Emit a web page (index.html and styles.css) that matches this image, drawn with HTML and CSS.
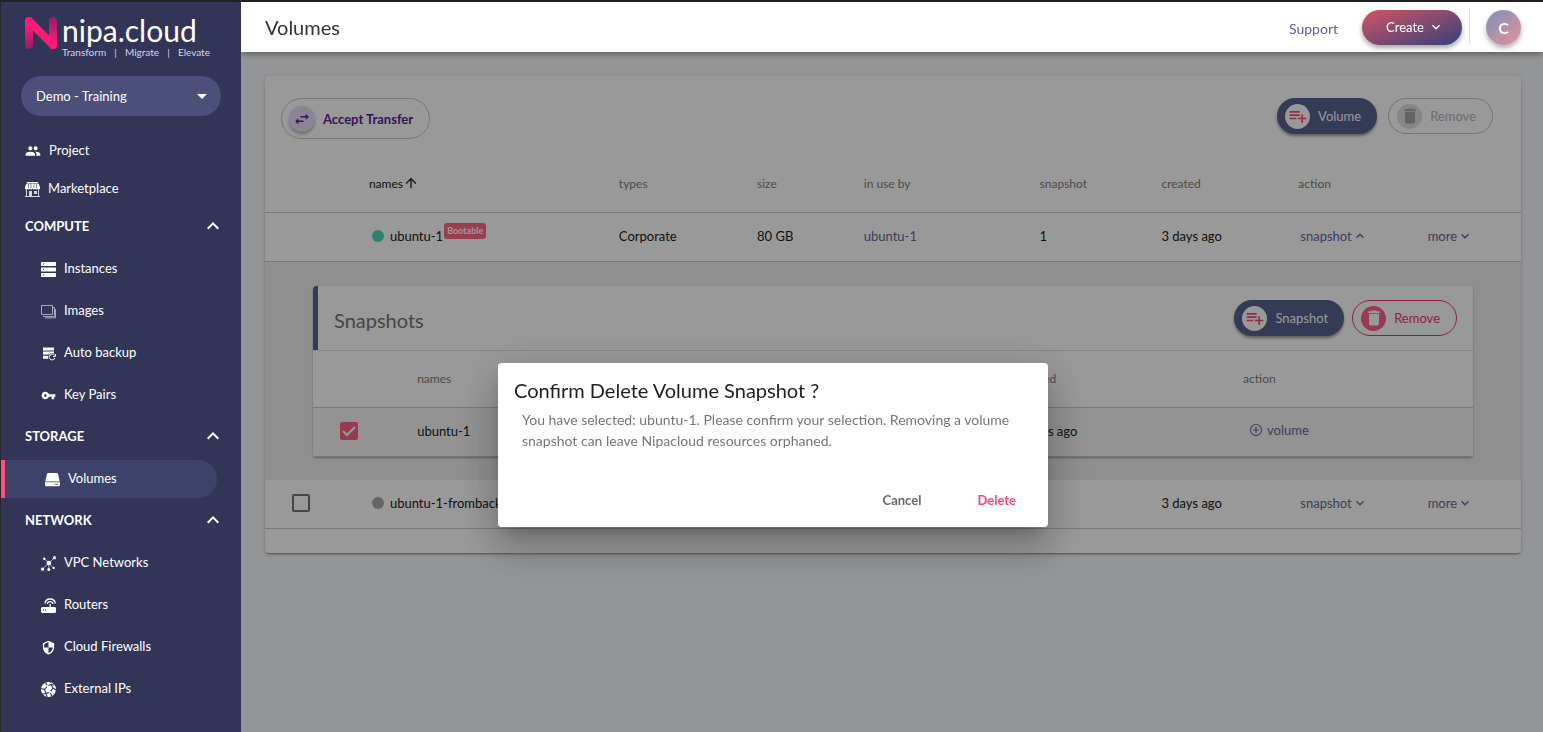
FILE: index.html
```
<!DOCTYPE html>
<html lang="en">
<head>
<meta charset="utf-8">
<title>Volumes - nipa.cloud</title>
<link rel="stylesheet" href="styles.css">
</head>
<body>
<svg class="sprite" aria-hidden="true">
  <symbol id="down" viewBox="0 0 24 24"><path d="M7.41 8.59 12 13.17l4.59-4.58L18 10l-6 6-6-6z"/></symbol>
  <symbol id="up" viewBox="0 0 24 24"><path d="M7.41 15.41 12 10.83l4.59 4.58L18 14l-6-6-6 6z"/></symbol>
  <symbol id="list-add" viewBox="0 0 24 24"><path d="M14 10H2v2h12zM14 6H2v2h12zM18 14v-4h-2v4h-4v2h4v4h2v-4h4v-2zM2 16h8v-2H2z"/></symbol>
  <symbol id="trash" viewBox="0 0 24 24"><path d="M6 19c0 1.100.9 2 2 2h8c1.100 0 2-.9 2-2V7H6zM19 4h-3.500l-1-1h-5l-1 1H5v2h14z"/></symbol>
</svg>

<div class="app">
  <aside class="sidebar">
    <div class="brand">
      <svg class="brand-mark" viewBox="0 0 32 32" aria-hidden="true">
        <defs>
          <linearGradient id="stem-left" x1="0" y1="0" x2="0" y2="1"><stop offset=".3" stop-color="#ff1a75"/><stop offset="1" stop-color="#8c1f68"/></linearGradient>
          <linearGradient id="stem-right" x1="0" y1="0" x2="0" y2="1"><stop offset="0" stop-color="#8c1f68"/><stop offset=".8" stop-color="#ff1a75"/></linearGradient>
        </defs>
        <rect x="0" y="0" width="8" height="32" rx="4" fill="url(#stem-left)"/>
        <rect x="24" y="0" width="8" height="32" rx="4" fill="url(#stem-right)"/>
        <path d="M4 4 28 28" stroke="#ff1a75" stroke-width="8" stroke-linecap="round"/>
      </svg>
      <div class="brand-text">
        <span class="brand-name">nipa.cloud</span>
        <span class="brand-tag"><span>Transform</span><span>|</span><span>Migrate</span><span>|</span><span>Elevate</span></span>
      </div>
    </div>

    <button class="project-picker" type="button">
      <span>Demo - Training</span>
      <svg class="icon-24" viewBox="0 0 24 24" aria-hidden="true"><path d="m7 10 5 5 5-5z"/></svg>
    </button>

    <nav class="nav">
      <a class="nav-top" href="#"><svg class="icon-16" viewBox="0 0 24 24" aria-hidden="true"><path d="M16 11c1.660 0 3-1.340 3-3s-1.340-3-3-3-3 1.340-3 3 1.340 3 3 3zM8 11c1.660 0 3-1.340 3-3S9.660 5 8 5 5 6.340 5 8s1.340 3 3 3zM8 13c-2.330 0-7 1.170-7 3.500V19h14v-2.500C15 14.170 10.330 13 8 13zM16 13c-.29 0-.62.02-.97.05C16.190 13.890 17 15.020 17 16.500V19h6v-2.500c0-2.330-4.670-3.500-7-3.500z"/></svg>Project</a>
      <a class="nav-top" href="#"><svg class="icon-15" viewBox="0 0 15 15" aria-hidden="true"><path d="M2 0h11v1H2zM1.500 1.500h12L15 5v1a1.200 1.200 0 0 1-2.500.5 1.300 1.300 0 0 1-2.500 0 1.300 1.300 0 0 1-2.500 0 1.300 1.300 0 0 1-2.500 0 1.300 1.300 0 0 1-2.500 0A1.200 1.200 0 0 1 0 6V5z"/><path d="M3.500 2v4M6 2v4M9 2v4M11.500 2v4" stroke="#323558" stroke-width=".6"/><path d="M1 7.500h1V14h11V7.500h1V14h1v1H0v-1h1zM4 9h3v5H4zM9 9h3v3H9z" opacity=".8"/></svg>Marketplace</a>

      <button class="nav-head" type="button">COMPUTE<svg class="icon-24" aria-hidden="true"><use href="#up"/></svg></button>
      <a class="nav-item" href="#"><svg class="icon-15" viewBox="0 0 15 15" aria-hidden="true"><path d="M.5 0h14l.5.5v3l-.5.5H.5L0 3.500v-3zM.5 5.500h14l.5.5v3l-.5.5H.5L0 9V6zM.5 11h14l.5.5v3l-.5.5H.5l-.5-.5v-3z"/><path d="M2 2h1M2 7.500h1M2 13h1" stroke="#323558"/></svg>Instances</a>
      <a class="nav-item" href="#"><svg class="icon-15" viewBox="0 0 15 15" aria-hidden="true"><path d="M.5 1.500h11v9H.5zM2 12.500h11.500V3.500h-1.500M4 13.900h10.500V5.500h-1" fill="none" stroke="#b4b6cc" stroke-width=".9"/></svg>Images</a>
      <a class="nav-item" href="#"><svg class="icon-15" viewBox="0 0 15 15" aria-hidden="true"><path d="M2 1.500h11v3H2zM2 5.500h11v2a5 5 0 0 0-4.500 1H2zM2 9.700h5.500a4 4 0 0 0-.2 3H2z"/><path d="M13.500 9.200A2.900 2.900 0 1 0 14 12M14.400 8v2.500H12" fill="none" stroke="#fff" stroke-width="1"/></svg>Auto backup</a>
      <a class="nav-item" href="#"><svg class="icon-15" viewBox="0 0 24 24" aria-hidden="true"><path fill-rule="evenodd" d="M12.650 10C11.830 7.670 9.610 6 7 6c-3.310 0-6 2.690-6 6s2.690 6 6 6c2.610 0 4.830-1.670 5.650-4H17v4h4v-4h2v-4zM7 14c-1.100 0-2-.9-2-2s.9-2 2-2 2 .9 2 2-.9 2-2 2z"/></svg>Key Pairs</a>

      <button class="nav-head" type="button">STORAGE<svg class="icon-24" aria-hidden="true"><use href="#up"/></svg></button>
      <a class="nav-item nav-item-active" href="#" aria-current="page"><svg class="icon-15" viewBox="0 0 15 15" aria-hidden="true"><path d="M3 1h9l1 .8 1.700 7.700H.3L2 1.800zM0 10.300h15v3l-1 1H1l-1-1z"/><path d="M10 12.300h3" stroke="#3d426b" stroke-width=".9"/></svg>Volumes</a>

      <button class="nav-head" type="button">NETWORK<svg class="icon-24" aria-hidden="true"><use href="#up"/></svg></button>
      <a class="nav-item" href="#"><svg class="icon-15" viewBox="0 0 15 15" aria-hidden="true"><path d="M3.500 3 7.800 7 13.500 1.800M1.500 13 7.800 7 12.500 12M7.800 7v6.500" stroke="#fff" stroke-width=".6" fill="none"/><circle cx="7.800" cy="7" r="2.300"/><circle cx="3.300" cy="2.800" r="1.200"/><circle cx="13.400" cy="1.700" r="1.600"/><circle cx="1.600" cy="13.200" r="1.600"/><circle cx="12.700" cy="12" r="1.200"/><circle cx="7.800" cy="13.500" r="1.500"/></svg>VPC Networks</a>
      <a class="nav-item" href="#"><svg class="icon-15" viewBox="0 0 15 15" aria-hidden="true"><path d="M1 9h7.500V6h1.300v3H14l1 1v4l-1 1H1l-1-1v-4z"/><path d="M4 5.500a5.200 5.200 0 0 1 10.300 0M6.300 6a2.900 2.900 0 0 1 5.700 0" fill="none" stroke="#fff" stroke-width="1.300"/><path d="M2 12h1M4 12h1" stroke="#323558" stroke-width="1.200"/></svg>Routers</a>
      <a class="nav-item" href="#"><svg class="icon-15" viewBox="0 0 24 24" aria-hidden="true"><path fill-rule="evenodd" d="M12 1 3 5v6c0 5.550 3.840 10.740 9 12 5.160-1.260 9-6.450 9-12V5zM12 12h7c-.53 4.120-3.280 7.790-7 8.940V12H5V6.300l7-3.110z"/></svg>Cloud Firewalls</a>
      <a class="nav-item" href="#"><svg class="icon-15" viewBox="0 0 15 15" aria-hidden="true"><circle cx="7.500" cy="7.500" r="7.500"/><path d="M4.500.5 6.500 4 10 2.500 13 3M6.500 4 3.500 7.500 0 6.500M3.500 7.500 5 11.500 1.500 12M5 11.500 9 10l3-4-2-3.500M12 6l3 2M9 10l2 4.500M5 11.500 6 15" fill="none" stroke="#323558" stroke-width="1.100"/><circle cx="6.500" cy="4" r="1"/><circle cx="9" cy="10" r="1.200"/></svg>External IPs</a>
    </nav>
  </aside>

  <div class="page">
    <header class="topbar">
      <h1 class="topbar-title">Volumes</h1>
      <a class="support" href="#">Support</a>
      <button class="create" type="button">Create<svg class="icon-16" aria-hidden="true"><use href="#down"/></svg></button>
      <span class="divider"></span>
      <button class="avatar" type="button" aria-label="Account">C</button>
    </header>

    <main class="content">
      <section class="card">
        <div class="toolbar">
          <button class="transfer" type="button"><span class="transfer-badge"><svg class="icon-18" viewBox="0 0 24 24" aria-hidden="true"><path d="M7 11 3 15l4 4v-3h7v-2H7zM21 9l-4-4v3h-7v2h7v3z"/></svg></span>Accept Transfer</button>
          <div class="actions">
            <button class="pill pill-solid" type="button"><span class="pill-badge"><svg class="icon-20" aria-hidden="true"><use href="#list-add"/></svg></span>Volume</button>
            <button class="pill pill-disabled" type="button" disabled><span class="pill-badge"><svg class="icon-20" aria-hidden="true"><use href="#trash"/></svg></span>Remove</button>
          </div>
        </div>

        <table class="table volumes">
          <colgroup><col class="c-check"><col class="c-name"><col class="c-type"><col class="c-size"><col class="c-use"><col class="c-snap"><col class="c-created"><col class="c-action"><col class="c-more"></colgroup>
          <thead>
            <tr><th></th><th class="sorted"><span class="cell">names<svg class="icon-16" viewBox="0 0 24 24" aria-hidden="true"><path d="m4 12 1.410 1.410L11 7.830V20h2V7.830l5.580 5.590L20 12l-8-8z"/></svg></span></th><th>types</th><th>size</th><th>in use by</th><th>snapshot</th><th>created</th><th>action</th><th></th></tr>
          </thead>
          <tbody>
            <tr>
              <td></td>
              <td><span class="cell volume-name"><span class="dot dot-on"></span>ubuntu-1<span class="tag">Bootable</span></span></td>
              <td>Corporate</td><td>80 GB</td><td><a class="link" href="#">ubuntu-1</a></td><td>1</td><td>3 days ago</td>
              <td><button class="link link-menu" type="button">snapshot<svg class="icon-16" aria-hidden="true"><use href="#up"/></svg></button></td>
              <td><button class="link link-more" type="button">more<svg class="icon-16" aria-hidden="true"><use href="#down"/></svg></button></td>
            </tr>
            <tr class="expanded">
              <td colspan="9">
                <div class="subcard">
                  <div class="subcard-head">
                    <h2 class="subcard-title">Snapshots</h2>
                    <div class="actions">
                      <button class="pill pill-solid" type="button"><span class="pill-badge"><svg class="icon-20" aria-hidden="true"><use href="#list-add"/></svg></span>Snapshot</button>
                      <button class="pill pill-danger" type="button"><span class="pill-badge"><svg class="icon-20" aria-hidden="true"><use href="#trash"/></svg></span>Remove</button>
                    </div>
                  </div>
                  <table class="table snapshots">
                    <colgroup><col class="s-check"><col class="s-name"><col class="s-created"><col class="s-action"></colgroup>
                    <thead><tr><th></th><th>names</th><th>created</th><th>action</th></tr></thead>
                    <tbody>
                      <tr class="selected">
                        <td><input class="check" type="checkbox" aria-label="Select snapshot ubuntu-1" checked></td>
                        <td>ubuntu-1</td><td>3 days ago</td>
                        <td><button class="link link-add" type="button"><svg class="icon-14" viewBox="0 0 24 24" aria-hidden="true"><path d="M12 2.500a9.500 9.500 0 1 0 0 19 9.500 9.500 0 0 0 0-19zM12 7v10M7 12h10" fill="none" stroke="currentColor" stroke-width="2"/></svg>volume</button></td>
                      </tr>
                    </tbody>
                  </table>
                </div>
              </td>
            </tr>
            <tr>
              <td><input class="check" type="checkbox" aria-label="Select ubuntu-1-frombackup"></td>
              <td><span class="cell volume-name"><span class="dot"></span>ubuntu-1-frombackup</span></td>
              <td></td><td></td><td></td><td></td><td>3 days ago</td>
              <td><button class="link link-menu" type="button">snapshot<svg class="icon-16" aria-hidden="true"><use href="#down"/></svg></button></td>
              <td><button class="link link-more" type="button">more<svg class="icon-16" aria-hidden="true"><use href="#down"/></svg></button></td>
            </tr>
          </tbody>
        </table>
      </section>
    </main>
  </div>
</div>

<div class="scrim">
  <div class="dialog" role="dialog" aria-modal="true" aria-labelledby="dialog-title">
    <h2 class="dialog-title" id="dialog-title">Confirm Delete Volume Snapshot ?</h2>
    <p class="dialog-text">You have selected: ubuntu-1. Please confirm your selection. Removing a volume snapshot can leave Nipacloud resources orphaned.</p>
    <div class="dialog-actions">
      <button class="dialog-button" type="button">Cancel</button>
      <button class="dialog-button dialog-button-danger" type="button">Delete</button>
    </div>
  </div>
</div>
</body>
</html>
```
FILE: styles.css
```
* { box-sizing: border-box; }

body {
  margin: 0;
  font-family: Lato, "Liberation Sans", sans-serif;
  font-size: 13px;
  color: #212121;
  background: #f5f8fc;
}

button {
  font: inherit;
  color: inherit;
  background: none;
  border: 0;
  padding: 0;
  cursor: pointer;
}

a { color: inherit; text-decoration: none; }
h1, h2, p { margin: 0; font-weight: 400; }
svg { fill: currentColor; flex: none; display: block; }

.sprite { display: none; }
.icon-14 { width: 14px; height: 14px; }
.icon-15 { width: 15px; height: 15px; }
.icon-16 { width: 16px; height: 16px; }
.icon-18 { width: 18px; height: 18px; }
.icon-20 { width: 20px; height: 20px; }
.icon-24 { width: 24px; height: 24px; }

.app {
  display: flex;
  min-height: 100vh;
  border-top: 2px solid #383838;
  border-left: 1px solid #444;
}

/* Sidebar */
.sidebar {
  position: relative;
  z-index: 3;
  width: 240px;
  flex: none;
  padding-top: 15px;
  color: #fff;
  background: #323558;
}

.brand { display: flex; gap: 5px; height: 40px; padding: 0 31px 0 24px; }
.brand-mark { width: 32px; height: 32px; }
.brand-text { flex: 1; display: flex; flex-direction: column; gap: 4px; }
.brand-name { font-size: 30px; line-height: 26px; }
.brand-tag { display: flex; justify-content: space-between; font-size: 10px; line-height: 10px; color: #d5d6e2; }

.project-picker {
  display: flex;
  align-items: center;
  justify-content: space-between;
  width: 200px;
  height: 40px;
  margin: 19px 20px 16px;
  padding: 0 7px 0 15px;
  border-radius: 20px;
  background: #4b4f7a;
}

.nav { display: flex; flex-direction: column; }
.nav-top, .nav-head, .nav-item { display: flex; align-items: center; height: 38px; padding-bottom: 2px; }
.nav-top { gap: 8px; padding-left: 24px; }
.nav-head { justify-content: space-between; padding: 0 16px 2px 24px; font-weight: 700; }
.nav-item { gap: 8px; margin: 4px 24px 0 0; padding-left: 40px; }
.nav-top svg, .nav-item svg { margin-top: 2px; }
.nav-item + .nav-head { margin-top: 4px; }
.nav-item-active { border-left: 4px solid #ff4f81; border-radius: 0 19px 19px 0; background: #3d426b; }

/* Top bar */
.page { flex: 1; min-width: 0; }

.topbar {
  position: relative;
  z-index: 2;
  display: flex;
  align-items: center;
  height: 50px;
  padding: 0 22px 0 24px;
  background: #fff;
  box-shadow: 0 2px 4px -1px rgba(0, 0, 0, .2), 0 4px 5px rgba(0, 0, 0, .14), 0 1px 10px rgba(0, 0, 0, .12);
}

.topbar-title { flex: 1; font-size: 20px; color: #333; }
.support { margin-right: 24px; padding-top: 2px; font-size: 14px; color: #5f5d97; }

.create {
  display: flex;
  align-items: center;
  justify-content: center;
  gap: 4px;
  width: 100px;
  height: 35px;
  padding-left: 6px;
  border-radius: 18px;
  color: #fff;
  background: linear-gradient(160deg, #c85565 5%, #3f4079 95%);
  box-shadow: 0 3px 5px rgba(0, 0, 0, .35);
}

.divider { width: 1px; height: 35px; margin: 0 16px 0 7px; background: #ddd; }

.avatar {
  width: 35px;
  height: 35px;
  border-radius: 50%;
  font-size: 16px;
  font-weight: 700;
  color: #fff;
  background: linear-gradient(135deg, #7d90b5, #e8909f);
  box-shadow: 0 3px 5px rgba(0, 0, 0, .3);
}

/* Volumes card */
.content { padding: 24px 22px 24px 24px; }

.card {
  padding-bottom: 24px;
  border-radius: 4px;
  background: #fff;
  box-shadow: 0 3px 1px -2px rgba(0, 0, 0, .2), 0 2px 2px rgba(0, 0, 0, .14), 0 1px 5px rgba(0, 0, 0, .12);
}

.toolbar { display: flex; align-items: flex-start; justify-content: space-between; height: 80px; padding: 22px 28px 0 16px; }

.transfer {
  display: flex;
  align-items: center;
  gap: 8px;
  height: 41px;
  padding: 0 16px 0 7px;
  border: 1px solid #c4c4c4;
  border-radius: 21px;
  font-weight: 700;
  color: #5b1e91;
}

.transfer-badge, .pill-badge { display: flex; align-items: center; justify-content: center; border-radius: 50%; }
.transfer-badge { width: 26px; height: 26px; background: #ecdcf5; box-shadow: 0 2px 3px rgba(0, 0, 0, .3); }
.pill-badge { width: 25px; height: 25px; }

.actions { display: flex; gap: 8px; }
.toolbar .actions { gap: 11px; }

.pill {
  display: flex;
  align-items: center;
  gap: 8px;
  height: 36px;
  padding: 0 16px 0 8px;
  border: 1px solid transparent;
  border-radius: 18px;
}

.pill-solid { padding: 0 15px 0 7px; color: #fff; background: #576391; box-shadow: 0 2px 3px rgba(0, 0, 0, .4); }
.pill-solid .pill-badge { color: #f44b78; background: #fff; }
.pill-danger { border-color: #e6396e; color: #e6396e; }
.pill-danger .pill-badge { color: #fff; background: #ff5f8a; }
.pill-disabled { border-color: #c0c0c0; color: #b5b5b5; }
.pill-disabled .pill-badge { color: #a6a6a6; background: #dfdfdf; }

/* Tables */
.table { width: 100%; table-layout: fixed; border-collapse: separate; border-spacing: 0; }
.table th, .table td { padding: 0 16px 2px; text-align: left; white-space: nowrap; border-bottom: 1px solid #c8c8c8; }
.table th { height: 57px; font-size: 12px; font-weight: 400; color: #7d7d7d; }
.table td { height: 49px; }
.table .sorted { color: #212121; }

.c-check { width: 7%; }
.c-name { width: 19.900%; }
.c-type { width: 11%; }
.c-size { width: 8.5%; }
.c-use { width: 14%; }
.c-snap { width: 9.7%; }
.c-created { width: 10.9%; }
.c-action { width: 10.3%; }
.s-check { width: 7.6%; }
.s-name { width: 51.700%; }
.s-created { width: 19.500%; }

.cell { display: flex; align-items: center; }
.volume-name { padding-left: 3px; }
.dot { width: 12px; height: 12px; margin-right: 6px; border-radius: 50%; background: #a8a8a8; }
.dot-on { background: #4dd6b8; }
.tag { margin: 0 0 11px 1px; padding: 0 3px; border-radius: 3px; font-size: 9px; font-weight: 700; line-height: 16px; color: #fff; background: #ff6686; }

.link { display: inline-flex; align-items: center; color: #67659c; }
.link-menu { margin-left: 2px; }
.link-add { gap: 4px; margin-left: 6px; }

.check {
  appearance: none;
  display: block;
  width: 18px;
  height: 18px;
  margin: 0 0 0 11px;
  border: 2px solid #757575;
  border-radius: 2px;
}

.check:checked { border-color: #ff5f86; background: #ff5f86 url("data:image/svg+xml,%3Csvg xmlns='http://www.w3.org/2000/svg' viewBox='0 0 14 14'%3E%3Cpath d='M1 7l4 4 8-8' fill='none' stroke='white' stroke-width='2'/%3E%3C/svg%3E") center / 14px 14px; }

.table .expanded > td { height: auto; padding: 24px 48px 23px; border-bottom: 0; background: #eee; }

.subcard { border-radius: 4px; background: #fff; box-shadow: 0 1px 2px rgba(0, 0, 0, .35); }

.subcard-head {
  display: flex;
  align-items: center;
  justify-content: space-between;
  height: 64px;
  padding: 0 16px;
  border-left: 5px solid #576391;
  border-top-left-radius: 4px;
}

.subcard-title { padding-top: 4px; font-size: 20px; color: #757575; }
.snapshots { border-top: 1px solid #dedede; }
.selected { background: #f5f5f5; }

/* Confirmation dialog */
.scrim {
  position: fixed;
  inset: 0;
  z-index: 1;
  display: flex;
  align-items: center;
  justify-content: center;
  padding: 158px 0 0 3px;
  background: rgba(0, 0, 0, .4);
}

.dialog {
  width: 550px;
  padding: 15px 16px 9px;
  border-radius: 4px;
  background: #fff;
  box-shadow: 0 11px 15px -7px rgba(0, 0, 0, .2), 0 24px 38px 3px rgba(0, 0, 0, .14), 0 9px 46px 8px rgba(0, 0, 0, .12);
}

.dialog-title { font-size: 20px; line-height: 24px; }
.dialog-text { padding: 7px 8px 0; font-size: 14px; line-height: 21px; color: #757575; }
.dialog-actions { display: flex; justify-content: flex-end; gap: 24px; padding-top: 31px; }
.dialog-button { height: 36px; padding: 0 16px; font-weight: 700; color: #666; }
.dialog-button-danger { color: #f5487a; }
```
